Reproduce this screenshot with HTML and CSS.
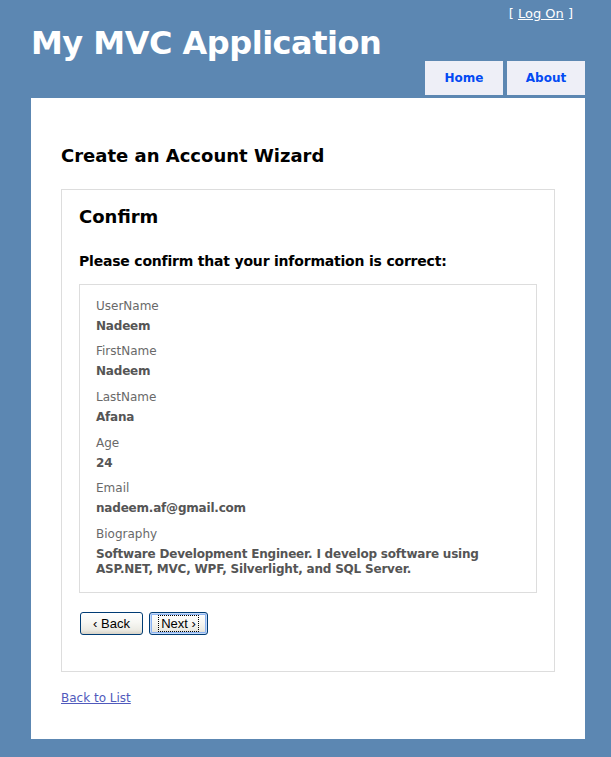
FILE: index.html
```html
<!DOCTYPE html>
<html lang="en">
<head>
<meta charset="utf-8">
<title>Create an Account Wizard</title>
<link rel="stylesheet" href="styles.css">
</head>
<body>
<div class="page">
  <header class="header">
    <div class="login">[ <a class="login-link" href="#">Log On</a> ]</div>
    <h1 class="site-title">My MVC Application</h1>
    <nav class="menu">
      <a class="tab" href="#">Home</a>
      <a class="tab" href="#">About</a>
    </nav>
  </header>
  <main class="main">
    <h2 class="page-title">Create an Account Wizard</h2>
    <div class="wizard">
      <h2 class="step-title">Confirm</h2>
      <h3 class="intro">Please confirm that your information is correct:</h3>
      <div class="details">
        <div class="row"><div class="label">UserName</div><div class="value">Nadeem</div></div>
        <div class="row"><div class="label">FirstName</div><div class="value">Nadeem</div></div>
        <div class="row"><div class="label">LastName</div><div class="value">Afana</div></div>
        <div class="row"><div class="label">Age</div><div class="value">24</div></div>
        <div class="row"><div class="label">Email</div><div class="value">nadeem.af@gmail.com</div></div>
        <div class="row"><div class="label">Biography</div><div class="value">Software Development Engineer. I develop software using ASP.NET, MVC, WPF, Silverlight, and SQL Server.</div></div>
      </div>
      <div class="buttons">
        <button class="btn btn-back" type="button">&lsaquo; Back</button>
        <button class="btn btn-next" type="button"><span class="focus-ring">Next &rsaquo;</span></button>
      </div>
    </div>
    <a class="back-link" href="#">Back to List</a>
  </main>
</div>
</body>
</html>
```
FILE: styles.css
```css
html, body {
  margin: 0;
  padding: 0;
}
body {
  background: #5c87b2;
  font-family: "DejaVu Sans", Verdana, sans-serif;
  font-size: 12px;
  color: #696969;
}
.page {
  width: 554px;
  margin-left: 31px;
  padding-bottom: 30px;
}
.header {
  display: flex;
  flex-direction: column;
}
.login {
  height: 26px;
  padding: 2px 12px 0 0;
  box-sizing: border-box;
  line-height: 24px;
  font-size: 13px;
  text-align: right;
  color: #fff;
}
.login-link {
  color: #fff;
  text-decoration: underline;
}
.site-title {
  margin: 0;
  height: 35px;
  line-height: 35px;
  font-size: 32px;
  letter-spacing: -0.5px;
  font-weight: bold;
  color: #fff;
}
.menu {
  display: flex;
  justify-content: flex-end;
  gap: 4px;
  height: 34px;
  margin-bottom: 3px;
}
.tab {
  width: 78px;
  line-height: 35px;
  text-align: center;
  background: #eeeff7;
  color: #034af3;
  font-weight: bold;
  font-size: 12px;
  text-decoration: none;
}
.main {
  background: #fff;
  padding: 47px 30px 33px 30px;
}
.page-title {
  margin: 0 0 22px 0;
  font-size: 18px;
  line-height: 22px;
  font-weight: bold;
  color: #000;
}
.wizard {
  border: 1px solid #ddd;
  padding: 16px 17px 36px 17px;
}
.step-title {
  margin: 0;
  font-size: 18px;
  line-height: 22px;
  font-weight: bold;
  color: #000;
}
.intro {
  margin: 25px 0 14px 0;
  font-size: 14px;
  line-height: 17px;
  letter-spacing: -0.2px;
  font-weight: bold;
  color: #000;
}
.details {
  border: 1px solid #ddd;
  padding: 13.5px 16px 15px 16px;
}
.row + .row {
  margin-top: 10.7px;
}
.label {
  line-height: 15px;
  color: #696969;
}
.value {
  margin-top: 5px;
  line-height: 15px;
  letter-spacing: -0.2px;
  font-weight: bold;
  color: #555;
}
.buttons {
  display: flex;
  gap: 6px;
  margin: 19px 0 0 1px;
}
.btn {
  height: 23px;
  padding: 0;
  border: 1px solid #003c74;
  border-radius: 3px;
  background: linear-gradient(#ffffff 0%, #f7f7f3 45%, #ecebe4 80%, #d8d3c7 100%);
  font-family: "Liberation Sans", Tahoma, Arial, sans-serif;
  font-size: 13px;
  color: #000;
  display: flex;
  align-items: center;
  justify-content: center;
}
.btn-back {
  width: 63px;
}
.btn-next {
  width: 59px;
  box-shadow: inset 0 0 0 1px #c5daf8, inset 0 0 0 2px #8cb4f2;
}
.focus-ring {
  border: 1px dotted #000;
  padding: 0 2px;
  line-height: 15px;
}
.back-link {
  display: block;
  width: max-content;
  margin-top: 19px;
  line-height: 15px;
  color: #505abc;
  text-decoration: underline;
}
```
